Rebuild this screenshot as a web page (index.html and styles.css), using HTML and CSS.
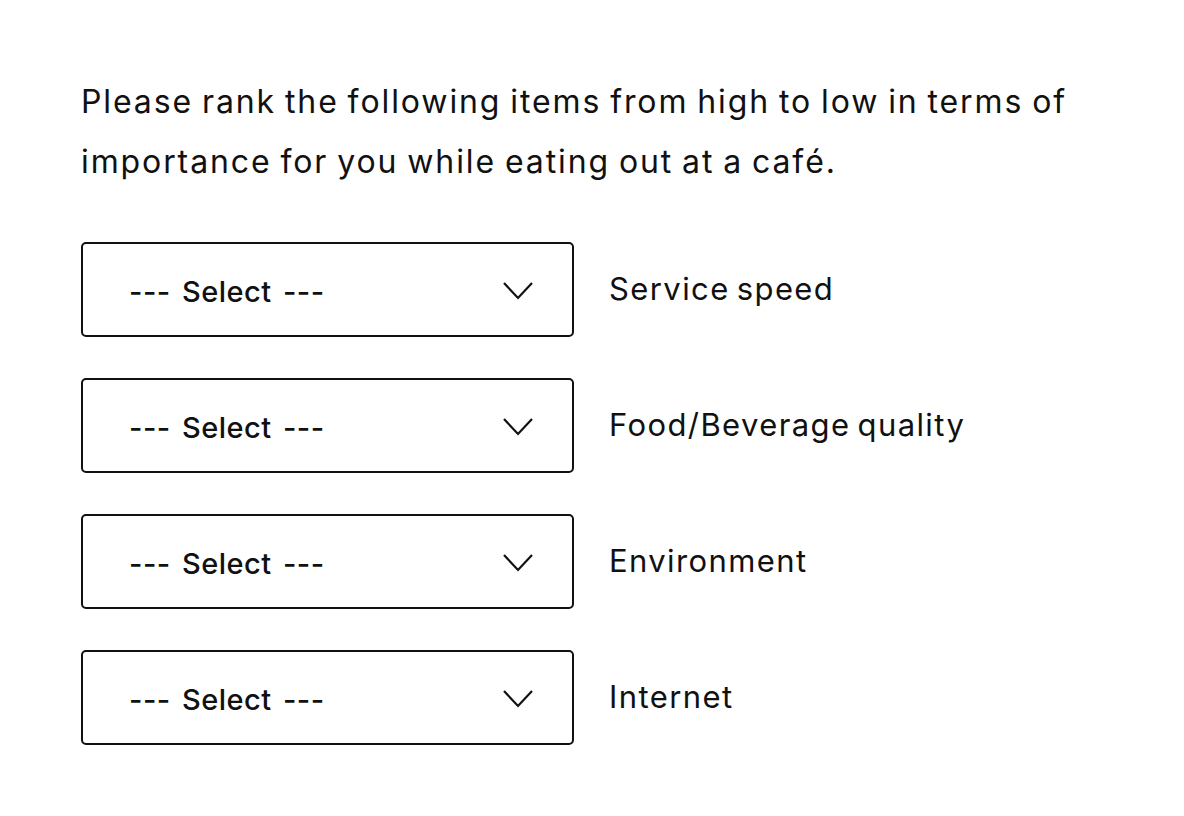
FILE: index.html
```html
<!DOCTYPE html>
<html lang="en">
<head>
  <meta charset="UTF-8" />
  <meta name="viewport" content="width=device-width, initial-scale=1.0" />
  <title>Rank items</title>
  <link rel="stylesheet" href="styles.css">
</head>
<body>
  <main class="question">
    <h1>Please rank the following items from high to low in terms of importance for you while eating out at a café.</h1>

    <div class="rank-list">
      <div class="rank-row">
        <div class="select-box">
          <span class="placeholder">--- Select ---</span>
          <svg class="chevron" width="32" height="20" viewBox="0 0 32 20"><path d="M2 2 L16 17 L30 2" fill="none" stroke="#111" stroke-width="2.2"/></svg>
        </div>
        <span class="item-label">Service speed</span>
      </div>
      <div class="rank-row">
        <div class="select-box">
          <span class="placeholder">--- Select ---</span>
          <svg class="chevron" width="32" height="20" viewBox="0 0 32 20"><path d="M2 2 L16 17 L30 2" fill="none" stroke="#111" stroke-width="2.2"/></svg>
        </div>
        <span class="item-label">Food/Beverage quality</span>
      </div>
      <div class="rank-row">
        <div class="select-box">
          <span class="placeholder">--- Select ---</span>
          <svg class="chevron" width="32" height="20" viewBox="0 0 32 20"><path d="M2 2 L16 17 L30 2" fill="none" stroke="#111" stroke-width="2.2"/></svg>
        </div>
        <span class="item-label">Environment</span>
      </div>
      <div class="rank-row">
        <div class="select-box">
          <span class="placeholder">--- Select ---</span>
          <svg class="chevron" width="32" height="20" viewBox="0 0 32 20"><path d="M2 2 L16 17 L30 2" fill="none" stroke="#111" stroke-width="2.2"/></svg>
        </div>
        <span class="item-label">Internet</span>
      </div>
    </div>
  </main>
</body>
</html>
```

FILE: styles.css
```css
body {
  margin: 0;
  background: #fff;
  color: #111;
  font-family: Inter, 'Noto Sans', sans-serif;
}
.question {
  padding: 72px 81px;
}
h1 {
  margin: 0 0 50px;
  font-size: 32px;
  font-weight: 400;
  line-height: 60px;
  max-width: 1020px;
  letter-spacing: 1.9px;
  word-spacing: -2px;
}
.rank-list {
  display: flex;
  flex-direction: column;
  gap: 41px;
}
.rank-row {
  display: flex;
  align-items: center;
  gap: 35px;
}
.select-box {
  box-sizing: border-box;
  width: 493px;
  height: 95px;
  border: 2px solid #111;
  border-radius: 5px;
  display: flex;
  align-items: center;
  justify-content: space-between;
  padding: 4px 37px 0 46px;
}
.placeholder {
  font-size: 29px;
  font-weight: 500;
  letter-spacing: 0.5px;
  word-spacing: 3px;
}
.chevron {
  display: block;
  margin-top: -1px;
  margin-right: 1px;
}
.item-label {
  font-size: 31px;
  margin-top: -2px;
  letter-spacing: 1.4px;
  word-spacing: -3px;
}
```
